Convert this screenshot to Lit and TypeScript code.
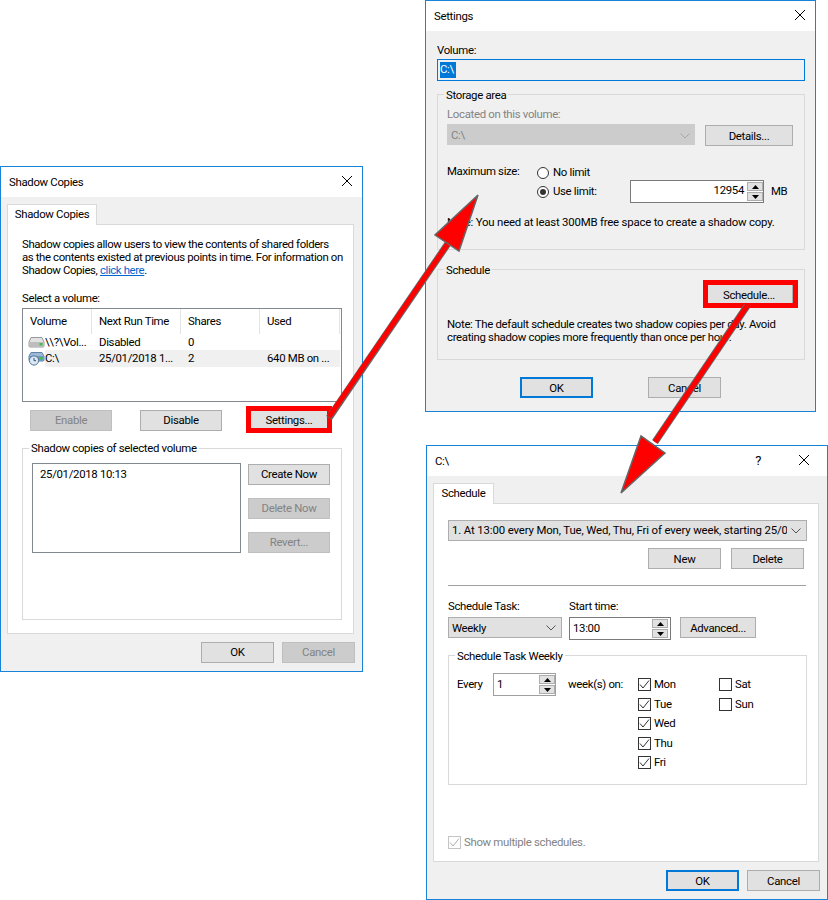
import { LitElement, html, css, svg } from "lit";
import { customElement } from "lit/decorators.js";

const closeX = html`<svg class="x" width="12" height="12" viewBox="0 0 12 12"><path d="M1 1 L11 11 M11 1 L1 11" stroke="#000" stroke-width="1" fill="none"/></svg>`;
const chevron = html`<svg class="chev" width="10" height="6" viewBox="0 0 10 6"><path d="M0.5 0.5 L5 5 L9.5 0.5" stroke="currentColor" stroke-width="1" fill="none"/></svg>`;
const spin = html`<div class="spin">
  <div class="sb"><svg width="7" height="4" viewBox="0 0 7 4"><path d="M3.5 0 L7 4 L0 4 Z" fill="#000"/></svg></div>
  <div class="sb"><svg width="7" height="4" viewBox="0 0 7 4"><path d="M0 0 L7 0 L3.5 4 Z" fill="#000"/></svg></div>
</div>`;
const tick = html`<svg width="11" height="11" viewBox="0 0 11 11"><path d="M1 5.5 L4 9 L10 1.5" stroke="currentColor" stroke-width="1" fill="none"/></svg>`;

const driveIcon = html`<svg class="dicon" width="17" height="12" viewBox="0 0 17 12">
  <path d="M3 1.5 H14 L16 6 V10 Q16 11 15 11 H2 Q1 11 1 10 V6 Z" fill="#e2e2e2" stroke="#9a9a9a"/>
  <rect x="1.5" y="6" width="14" height="4.5" fill="#bdbdbd"/>
  <rect x="11.5" y="7" width="3" height="2.5" fill="#3fc24a"/>
</svg>`;
const schedIcon = html`<svg class="dicon" width="17" height="15" viewBox="0 0 17 15">
  <path d="M3 1.5 H14 L16 5 V9 Q16 10 15 10 H2 Q1 10 1 9 V5 Z" fill="#9db9d6" stroke="#5f83a8"/>
  <rect x="1.5" y="5" width="14" height="4.5" fill="#6f95bb"/>
  <rect x="11.5" y="6" width="3" height="2.5" fill="#3fc24a"/>
  <circle cx="6" cy="9.5" r="4.6" fill="#dce8f3" stroke="#4f769d"/>
  <path d="M6 7 V9.7 H8" stroke="#2f4f70" fill="none"/>
</svg>`;

const arrows = svg`
  <g stroke-linejoin="miter">
    <line x1="329" y1="418" x2="449" y2="242" stroke="#666" stroke-width="7"/>
    <line x1="329" y1="417" x2="449" y2="242" stroke="#f00" stroke-width="5"/>
    <polygon points="478,195 435,235 459,251" fill="#f00" stroke="#666" stroke-width="1.5"/>
    <line x1="747" y1="306" x2="655" y2="442" stroke="#666" stroke-width="7"/>
    <line x1="747" y1="306" x2="655" y2="442" stroke="#f00" stroke-width="5"/>
    <polygon points="621,493 641,436 665,453" fill="#f00" stroke="#666" stroke-width="1.5"/>
  </g>`;

@customElement("app-root")
export class AppRoot extends LitElement {
  static styles = css`
    :host {
      display: block;
      position: relative;
      width: 828px;
      height: 900px;
      overflow: hidden;
      background: #fff;
      font-family: Roboto, "Noto Sans", sans-serif;
      font-size: 11.4px;
      letter-spacing: -0.32px;
      line-height: 13px;
      color: #000;
    }
    * { box-sizing: border-box; }
    .win {
      position: absolute;
      border: 1px solid #1883d7;
      background: #f0f0f0;
      display: flex;
      flex-direction: column;
    }
    .w1 { left: 0; top: 166px; width: 363px; height: 506px; }
    .w2 { left: 425px; top: 0; width: 391px; height: 412px; }
    .w3 { left: 426px; top: 445px; width: 402px; height: 455px; }
    .title {
      height: 30px;
      flex: none;
      background: #fff;
      display: flex;
      align-items: center;
      padding: 0 9px 0 8px;
      gap: 37px;
    }
    .w3 .title { padding-right: 17px; }
    .title .grow { flex: 1; padding-top: 1px; }
    .q { font-size: 13px; margin-bottom: 1px; }
    .x { display: block; margin-bottom: 2px; }
    .tab {
      position: relative;
      z-index: 1;
      height: 21px;
      background: #fff;
      border: 1px solid #d9d9d9;
      border-bottom: none;
      padding-bottom: 2px;
      display: flex;
      align-items: center;
      justify-content: center;
    }
    .tab1 { width: 90px; margin: 7px 0 -1px 6px; }
    .tab3 { width: 61px; margin: 7px 0 -1px 6px; }
    .panel {
      background: #fff;
      border: 1px solid #d9d9d9;
      flex: none;
    }
    .p1 { width: 347px; height: 410px; margin-left: 6px; padding: 13px 0 0 14px; }
    .p3 { width: 386px; height: 359px; margin-left: 6px; padding: 16px 0 0 14px; }
    .btn {
      flex: none;
      height: 21px;
      background: #e1e1e1;
      border: 1px solid #adadad;
      display: flex;
      align-items: center;
      justify-content: center;
      position: relative;
    }
    .w2 .btn, .w3 .btn { padding-top: 2px; }
    .btn.off { background: #ccc; border-color: #bfbfbf; color: #838383; }
    .btn.def { border: 2px solid #0078d7; }
    .w73 { width: 73px; }
    .w82 { width: 82px; }
    .w78 { width: 78px; }
    .w88 { width: 88px; }
    .w76 { width: 76px; }
    .red::after {
      content: "";
      position: absolute;
      border: 5px solid #f00;
    }
    .r1::after { inset: -5px -5px -3px -5px; }
    .r2::after { inset: -5px -6px -4px -3px; }

    /* group boxes */
    .group {
      position: relative;
      border: 1px solid #d9d9d9;
    }
    .legend {
      position: absolute;
      left: 6px;
      top: -7px;
      padding: 0 2px;
      background: inherit;
    }
    .w2 .legend, .w3 .legend { top: -6px; height: 12px; }
    .onwhite { background: #fff; }
    .ongrey { background: #f0f0f0; }

    /* shadow copies */
    .lead { margin: 0; white-space: nowrap; letter-spacing: -0.38px; }
    .mt15 { margin-top: 15px; }
    .vols {
      margin-top: 3px;
      width: 320px;
      height: 94px;
      border: 1px solid #828790;
    }
    .vrow {
      display: grid;
      grid-template-columns: 69px 89px 79px 80px;
      width: 317px;
      height: 16px;
      align-items: center;
      white-space: nowrap;
    }
    .vrow.head { height: 25px; }
    .vrow.head > div {
      height: 100%;
      padding-left: 7px;
      display: flex;
      align-items: center;
      border-right: 1px solid #e5e5e5;
    }
    .vrow.tall { height: 17px; }
    .cell { height: 100%; padding-left: 7px; display: flex; align-items: center; }
    .hl { background: #f0f0f0; }
    .namecell { display: flex; height: 100%; align-items: center; padding-left: 5px; }
    .dicon { flex: none; display: block; margin-right: 0; }
    .name { flex: 1; height: 100%; display: flex; align-items: center; white-space: nowrap; overflow: hidden; }
    .row1 { display: flex; gap: 28px; margin: 8px 0 0 8px; }
    .g1 {
      margin-top: 17px;
      width: 320px;
      height: 172px;
      padding: 14px 0 0 9px;
      display: flex;
      gap: 7px;
    }
    .snaps {
      width: 209px;
      height: 90px;
      border: 1px solid #828790;
      padding: 4px 7px;
    }
    .col { display: flex; flex-direction: column; gap: 13px; margin-top: 1px; }
    .foot { display: flex; }
    .f1 { justify-content: flex-end; gap: 8px; padding: 8px 7px 0 0; }
    .f2 { gap: 55px; padding: 17px 0 0 83px; }
    .f3 { justify-content: flex-end; gap: 8px; padding: 8px 7px 0 0; }
    .link { color: #0066cc; text-decoration: underline; }

    /* settings */
    .b2 { padding: 13px 0 0 11px; }
    .vol {
      margin-top: 2px;
      width: 368px;
      height: 22px;
      border: 1px solid #0078d7;
      padding: 2px 2px;
    }
    .sel {
      display: block;
      width: 16px;
      height: 16px;
      line-height: 14px;
      background: #0078d7;
      color: #fff;
      text-align: left;
    }
    .g2a { margin-top: 13px; width: 368px; height: 156px; padding: 13px 0 0 9px; }
    .grey { color: #838383; }
    .combo-row { display: flex; gap: 10px; margin-top: 3px; }
    .combo {
      height: 21px;
      display: flex;
      align-items: center;
      justify-content: space-between;
      padding: 0 3px 0 3px;
      background: #e1e1e1;
      border: 1px solid #adadad;
      flex: none;
    }
    .combo.off { width: 248px; background: #ccc; border-color: #ccc; color: #838383; padding-top: 2px; }
    .combo.off .chev { color: #a8a8a8; margin-right: 1px; }
    .combo .chev { color: #555; margin-right: 2px; }
    .mt1 { margin-top: 1px; }
    .maxgrid {
      display: grid;
      grid-template-columns: 90px 93px 134px auto;
      margin-top: 18px;
      height: 39px;
    }
    .ml { padding-top: 1px; }
    .radios { display: flex; flex-direction: column; margin-top: -1px; }
    .radio { height: 19px; display: flex; align-items: center; gap: 4px; }
    .rb {
      width: 12px;
      height: 12px;
      border-radius: 50%;
      border: 1px solid #333;
      background: #fff;
      display: flex;
      align-items: center;
      justify-content: center;
      flex: none;
    }
    .rb i { display: block; width: 6px; height: 6px; border-radius: 50%; background: #333; }
    .spinbox {
      background: #fff;
      border: 1px solid #7a7a7a;
      display: flex;
      align-items: center;
      justify-content: space-between;
    }
    .sb2 { height: 23px; margin-top: 16px; padding-right: 0; }
    .sval { flex: 1; }
    .right { text-align: right; padding: 0 3px 3px 0; }
    .spin { display: flex; flex-direction: column; gap: 1px; width: 16px; flex: none; }
    .sb {
      height: 9px;
      background: #e1e1e1;
      border: 1px solid #adadad;
      display: flex;
      align-items: center;
      justify-content: center;
    }
    .mb { margin: 21px 0 0 7px; }
    .note { margin-top: 13px; letter-spacing: -0.2px; }
    .g2b { margin-top: 19px; width: 368px; height: 91px; padding: 14px 0 0 9px; }
    .sched-row { display: flex; justify-content: flex-end; padding-right: 11px; }
    .n2 { margin-top: 13px; white-space: nowrap; }
    .nw { white-space: nowrap; }

    /* schedule */
    .bigcombo { width: 359px; letter-spacing: -0.14px; }
    .bigcombo .txt { width: 335px; overflow: hidden; white-space: nowrap; }
    .row-new { display: flex; gap: 10px; margin: 7px 0 0 200px; }
    .sep { margin-top: 16px; width: 358px; height: 1px; background: #a0a0a0; }
    .taskgrid {
      display: grid;
      grid-template-columns: 121px 111px auto;
      row-gap: 4px;
      margin-top: 14px;
    }
    .weekly { width: 114px; padding-top: 1px; }
    .sb3 { width: 102px; height: 23px; padding: 0 2px 0 3px; }
    .sb4 { width: 63px; height: 23px; padding: 0 0 0 3px; border-color: #a0a0a0; }
    .g3 { margin-top: 15px; width: 359px; height: 130px; padding: 17px 0 0 8px; display: flex; }
    .every { width: 36px; padding-top: 5px; }
    .weeks { margin-left: 12px; width: 70px; padding-top: 5px; }
    .days {
      display: grid;
      grid-template-rows: repeat(5, 19.5px);
      grid-auto-flow: column;
      grid-auto-columns: 81px;
      margin-top: 2px;
    }
    .ck { display: flex; align-items: center; gap: 3px; }
    .box {
      width: 13px;
      height: 13px;
      border: 1px solid #333;
      background: #fff;
      display: flex;
      align-items: center;
      justify-content: center;
      color: #333;
      flex: none;
    }
    .box.off { border-color: #c4c4c4; color: #b0b0b0; }
    .showm { margin-top: 51px; color: #838383; height: 13px; }
    .arrows { position: absolute; left: 0; top: 0; pointer-events: none; }
  `;

  private ck(label: string, on: boolean) {
    return html`<div class="ck"><span class="box">${on ? tick : ""}</span>${label}</div>`;
  }

  render() {
    return html`
      <section class="win w1">
        <div class="title"><span class="grow">Shadow Copies</span>${closeX}</div>
        <div class="tab tab1">Shadow Copies</div>
        <div class="panel p1">
          <p class="lead">Shadow copies allow users to view the contents of shared folders<br />as the contents existed at previous points in time. For information on<br />Shadow Copies, <span class="link">click here</span>.</p>
          <div class="mt15">Select a volume:</div>
          <div class="vols">
            <div class="vrow head"><div>Volume</div><div>Next Run Time</div><div>Shares</div><div>Used</div></div>
            <div class="vrow">
              <div class="namecell">${driveIcon}<span class="name">\\\\?\\Vol...</span></div>
              <div class="cell">Disabled</div><div class="cell">0</div><div class="cell"></div>
            </div>
            <div class="vrow tall">
              <div class="namecell">${schedIcon}<span class="name hl">C:\\</span></div>
              <div class="cell hl">25/01/2018 1...</div><div class="cell hl">2</div><div class="cell hl">640 MB on ...</div>
            </div>
          </div>
          <div class="row1">
            <div class="btn off w82">Enable</div>
            <div class="btn w82">Disable</div>
            <div class="btn w78 red r1">Settings...</div>
          </div>
          <div class="group g1">
            <span class="legend onwhite">Shadow copies of selected volume</span>
            <div class="snaps">25/01/2018 10:13</div>
            <div class="col">
              <div class="btn w82">Create Now</div>
              <div class="btn off w82">Delete Now</div>
              <div class="btn off w82">Revert...</div>
            </div>
          </div>
        </div>
        <div class="foot f1"><div class="btn w73">OK</div><div class="btn off w73">Cancel</div></div>
      </section>

      <section class="win w2">
        <div class="title"><span class="grow">Settings</span>${closeX}</div>
        <div class="b2">
          <div>Volume:</div>
          <div class="vol"><span class="sel">C:\\</span></div>
          <div class="group g2a ongrey">
            <span class="legend ongrey">Storage area</span>
            <div class="grey">Located on this volume:</div>
            <div class="combo-row">
              <div class="combo off"><span>C:\\</span>${chevron}</div>
              <div class="btn w88 mt1">Details...</div>
            </div>
            <div class="maxgrid">
              <div class="ml">Maximum size:</div>
              <div class="radios">
                <div class="radio"><span class="rb"></span>No limit</div>
                <div class="radio"><span class="rb"><i></i></span>Use limit:</div>
              </div>
              <div class="spinbox sb2"><span class="sval right">12954</span>${spin}</div>
              <div class="mb">MB</div>
            </div>
            <div class="note nw">Note: You need at least 300MB free space to create a shadow copy.</div>
          </div>
          <div class="group g2b ongrey">
            <span class="legend ongrey">Schedule</span>
            <div class="sched-row"><div class="btn w88 red r2">Schedule...</div></div>
            <div class="n2">Note: The default schedule creates two shadow copies per day. Avoid<br />creating shadow copies more frequently than once per hour.</div>
          </div>
          <div class="foot f2"><div class="btn def w73">OK</div><div class="btn w73">Cancel</div></div>
        </div>
      </section>

      <section class="win w3">
        <div class="title"><span class="grow">C:\\</span><span class="q">?</span>${closeX}</div>
        <div class="tab tab3">Schedule</div>
        <div class="panel p3">
          <div class="combo bigcombo"><span class="txt">1. At 13:00 every Mon, Tue, Wed, Thu, Fri of every week, starting 25/01/2018</span>${chevron}</div>
          <div class="row-new"><div class="btn w73">New</div><div class="btn w73">Delete</div></div>
          <div class="sep"></div>
          <div class="taskgrid">
            <div>Schedule Task:</div><div>Start time:</div><div></div>
            <div class="combo weekly"><span>Weekly</span>${chevron}</div>
            <div class="spinbox sb3"><span class="sval">13:00</span>${spin}</div>
            <div class="btn w76">Advanced...</div>
          </div>
          <div class="group g3">
            <span class="legend onwhite">Schedule Task Weekly</span>
            <div class="every">Every</div>
            <div class="spinbox sb4"><span class="sval">1</span>${spin}</div>
            <div class="weeks">week(s) on:</div>
            <div class="days">
              ${this.ck("Mon", true)}${this.ck("Tue", true)}${this.ck("Wed", true)}${this.ck("Thu", true)}${this.ck("Fri", true)}
              ${this.ck("Sat", false)}${this.ck("Sun", false)}
            </div>
          </div>
          <div class="ck showm"><span class="box off">${tick}</span>Show multiple schedules.</div>
        </div>
        <div class="foot f3"><div class="btn def w73">OK</div><div class="btn w73">Cancel</div></div>
      </section>

      <svg class="arrows" width="828" height="900" viewBox="0 0 828 900">${arrows}</svg>
    `;
  }
}
